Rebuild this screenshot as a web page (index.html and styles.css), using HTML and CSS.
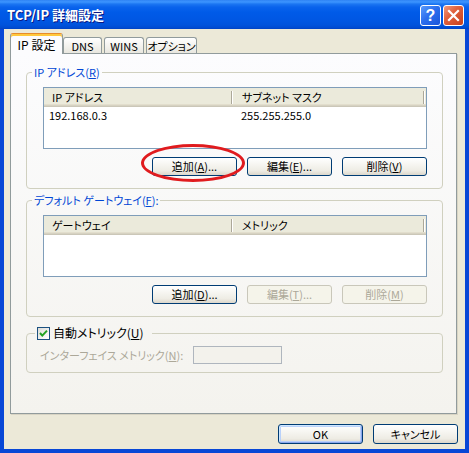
FILE: index.html
```html
<!DOCTYPE html>
<html lang="ja">
<head>
<meta charset="utf-8">
<title>TCP/IP 詳細設定</title>
<link rel="stylesheet" href="styles.css">
</head>
<body>
<div class="window">
  <div class="titlebar">
    <span class="title">TCP/IP 詳細設定</span>
    <span class="cap-btn help">?</span>
    <span class="cap-btn close">
      <svg width="19" height="19" viewBox="0 0 19 19"><path d="M5 5 L14 14 M14 5 L5 14" stroke="#fff" stroke-width="2.2" stroke-linecap="square" fill="none"/></svg>
    </span>
  </div>
  <div class="frame">
    <div class="tabs">
      <div class="tab selected">IP 設定</div>
      <div class="tab t-dns">DNS</div>
      <div class="tab t-wins">WINS</div>
      <div class="tab t-opt">オプション</div>
    </div>
    <div class="panel">
      <fieldset class="group">
        <legend class="group-label">IP アドレス(<u>R</u>)</legend>
        <div class="group-body">
          <div class="listview">
            <div class="lv-header">
              <div class="lv-col c1">IP アドレス</div>
              <div class="lv-col c2">サブネット マスク</div>
            </div>
            <div class="lv-row">
              <div class="lv-cell c1">192.168.0.3</div>
              <div class="lv-cell c2">255.255.255.0</div>
            </div>
          </div>
          <div class="btn-row">
            <span class="highlight-wrap"><button class="btn">追加(<u>A</u>)...</button><span class="ellipse"></span></span>
            <button class="btn">編集(<u>E</u>)...</button>
            <button class="btn">削除(<u>V</u>)</button>
          </div>
        </div>
      </fieldset>
      <fieldset class="group g2">
        <legend class="group-label">デフォルト ゲートウェイ(<u>F</u>):</legend>
        <div class="group-body">
          <div class="listview">
            <div class="lv-header">
              <div class="lv-col c1">ゲートウェイ</div>
              <div class="lv-col c2">メトリック</div>
            </div>
          </div>
          <div class="btn-row">
            <button class="btn">追加(<u>D</u>)...</button>
            <button class="btn" disabled>編集(<u>T</u>)...</button>
            <button class="btn" disabled>削除(<u>M</u>)</button>
          </div>
        </div>
      </fieldset>
      <fieldset class="group g3">
        <legend class="check-legend">
          <span class="checkbox"><svg width="11" height="11" viewBox="0 0 11 11"><path d="M2 5 L4.3 7.6 L9 2.6" stroke="#21A121" stroke-width="2" fill="none"/></svg></span>
          <span>自動メトリック(<u>U</u>)</span>
        </legend>
        <div class="metric-body">
          <span class="metric-label">インターフェイス メトリック(<u>N</u>):</span>
          <span class="textbox"></span>
        </div>
      </fieldset>
    </div>
    <div class="footer">
      <button class="btn big default">OK</button>
      <button class="btn big">キャンセル</button>
    </div>
  </div>
</div>
</body>
</html>
```
FILE: styles.css
```css
* { box-sizing: border-box; }
html, body { margin: 0; padding: 0; }
body {
  width: 469px;
  height: 453px;
  background: #0847D6;
  font-family: "Noto Sans CJK JP", "Noto Sans", sans-serif;
  font-size: 11px;
  font-feature-settings: "palt";
  color: #000;
  white-space: nowrap;
}
u { text-decoration: underline; text-underline-offset: 1px; }

.window {
  width: 469px;
  height: 453px;
  display: flex;
  flex-direction: column;
}

.titlebar {
  height: 29px;
  flex: none;
  display: flex;
  align-items: flex-start;
  padding: 5px 5px 0 7px;
  background: linear-gradient(to bottom, #2F83F4 0, #3D95FF 2px, #1C76F2 4px, #0A63EC 7px, #005BE8 12px, #0057E3 20px, #0053DC 25px, #004AD0 28px, #0041C0 29px);
}
.title {
  flex: 1;
  color: #fff;
  font-weight: bold;
  font-size: 13px;
  line-height: 20px;
  text-shadow: 1px 1px 0 #0A1883;
}
.cap-btn {
  width: 21px;
  height: 21px;
  border: 1px solid #fff;
  border-radius: 3px;
  display: flex;
  align-items: center;
  justify-content: center;
}
.help {
  margin-right: 2px;
  background: linear-gradient(135deg, #5A9CFB 0%, #2C6FEE 45%, #1A55DA 100%);
  color: #fff;
  font-family: "Liberation Sans", sans-serif;
  font-weight: bold;
  font-size: 16px;
  line-height: 19px;
}
.close {
  background: linear-gradient(135deg, #F09A7E 0%, #E0623E 40%, #C8401C 100%);
}

.frame {
  flex: 1;
  display: flex;
  flex-direction: column;
  background: #ECE9D8;
  border: 4px solid #0847D6;
  border-top: 0;
  padding: 4px 7px 0 6px;
}

.tabs {
  height: 20px;
  flex: none;
  display: flex;
  align-items: flex-end;
  position: relative;
  z-index: 1;
}
.tab {
  height: 16px;
  border: 1px solid #919B9C;
  border-bottom: 0;
  border-radius: 3px 3px 0 0;
  background: linear-gradient(#FFFFFF, #F4F3EF 50%, #E9E7DF);
  display: flex;
  align-items: center;
  justify-content: center;
  line-height: 14px;
}
.tab.selected {
  width: 53px;
  height: 21px;
  margin-bottom: -1px;
  background: #FCFCFE;
  border-top: 1px solid #E68B2C;
  box-shadow: inset 0 2px 0 #FFC83C;
  padding-top: 2px;
  font-size: 12px;
}
.t-dns { width: 39px; }
.t-wins { width: 40px; margin-left: 2px; }
.t-opt { width: 51px; margin-left: 2px; }

.panel {
  width: 447px;
  height: 361px;
  flex: none;
  border: 1px solid #919B9C;
  background: linear-gradient(#FCFCFE, #F4F3EE);
  padding: 11px 0 0 15px;
  box-shadow: 1px 1px 0 #D8D4C4;
}

.group {
  margin: 0;
  padding: 0;
  width: 417px;
  min-width: 0;
  border: 1px solid #D0D0BF;
  border-radius: 4px;
}
.group-label {
  margin-left: 5px;
  padding: 0 2px;
  height: 14px;
  line-height: 14px;
  color: #0046D5;
}
.group-body {
  padding: 8px 15px 12px 16px;
}
.g2 { margin-top: 4px; }
.g3 { margin-top: 9px; }

.listview {
  height: 62px;
  border: 1px solid #7F9DB9;
  background: #fff;
  overflow: hidden;
}
.lv-header {
  display: flex;
  height: 19px;
  background: #EBEADB;
  box-shadow: inset 0 -1px 0 #CBC7B8, inset 0 -2px 0 #D6D2C2, inset 0 -3px 0 #E2DECD;
}
.lv-col {
  line-height: 18px;
  height: 19px;
  background:
    linear-gradient(#ACA899, #ACA899) no-repeat right 1px top 3px / 1px 13px,
    linear-gradient(#FFFFFF, #FFFFFF) no-repeat right 0 top 3px / 1px 13px;
}
.lv-col.c1 { width: 189px; padding-left: 8px; }
.lv-col.c2 { width: 192px; padding-left: 9px; }
.lv-row {
  display: flex;
  height: 15px;
  line-height: 15px;
  padding-top: 1px;
}
.lv-cell.c1 { width: 189px; padding-left: 5px; }
.lv-cell.c2 { padding-left: 8px; }

.btn-row {
  display: flex;
  justify-content: flex-end;
  gap: 10px;
  margin-top: 8px;
}
.btn {
  font: inherit;
  font-feature-settings: "palt";
  width: 85px;
  height: 19px;
  padding: 0;
  border: 1px solid #003C74;
  border-radius: 3px;
  background: linear-gradient(#FFFFFF 0%, #F7F6F2 35%, #EEECE4 75%, #DCD7CB 100%);
  color: #000;
  line-height: 17px;
  text-align: center;
}
.btn:disabled {
  border-color: #C9C7BA;
  background: #F5F4EA;
  color: #ACA899;
}
.btn.big { height: 20px; line-height: 18px; }
.btn.default {
  box-shadow: inset 1px 1px 0 #CEE7FF, inset -1px -1px 0 #8AA6EC, inset 0 0 0 2px #B9D1FA;
}

.highlight-wrap {
  position: relative;
  display: inline-flex;
}
.ellipse {
  position: absolute;
  left: -11px;
  top: -13px;
  width: 104px;
  height: 38px;
  border: 3px solid #E01B1E;
  border-radius: 50%;
  pointer-events: none;
}

.check-legend {
  margin-left: 8px;
  padding: 0 2px;
  width: 117px;
  height: 14px;
  line-height: 14px;
  display: flex;
  align-items: center;
  gap: 3px;
  font-size: 12px;
}
.checkbox {
  width: 13px;
  height: 13px;
  flex: none;
  border: 1px solid #1C5180;
  background: linear-gradient(135deg, #DCDCD7, #FFFFFF);
  display: flex;
  align-items: center;
  justify-content: center;
}
.metric-body {
  display: flex;
  align-items: center;
  padding: 6px 0 8px 13px;
}
.metric-label {
  width: 153px;
  color: #ACA899;
  line-height: 14px;
}
.textbox {
  width: 89px;
  height: 18px;
  border: 1px solid #AFB6BE;
  background: #F3F2EC;
}

.footer {
  display: flex;
  justify-content: flex-end;
  gap: 10px;
  margin-top: 10px;
}
```
